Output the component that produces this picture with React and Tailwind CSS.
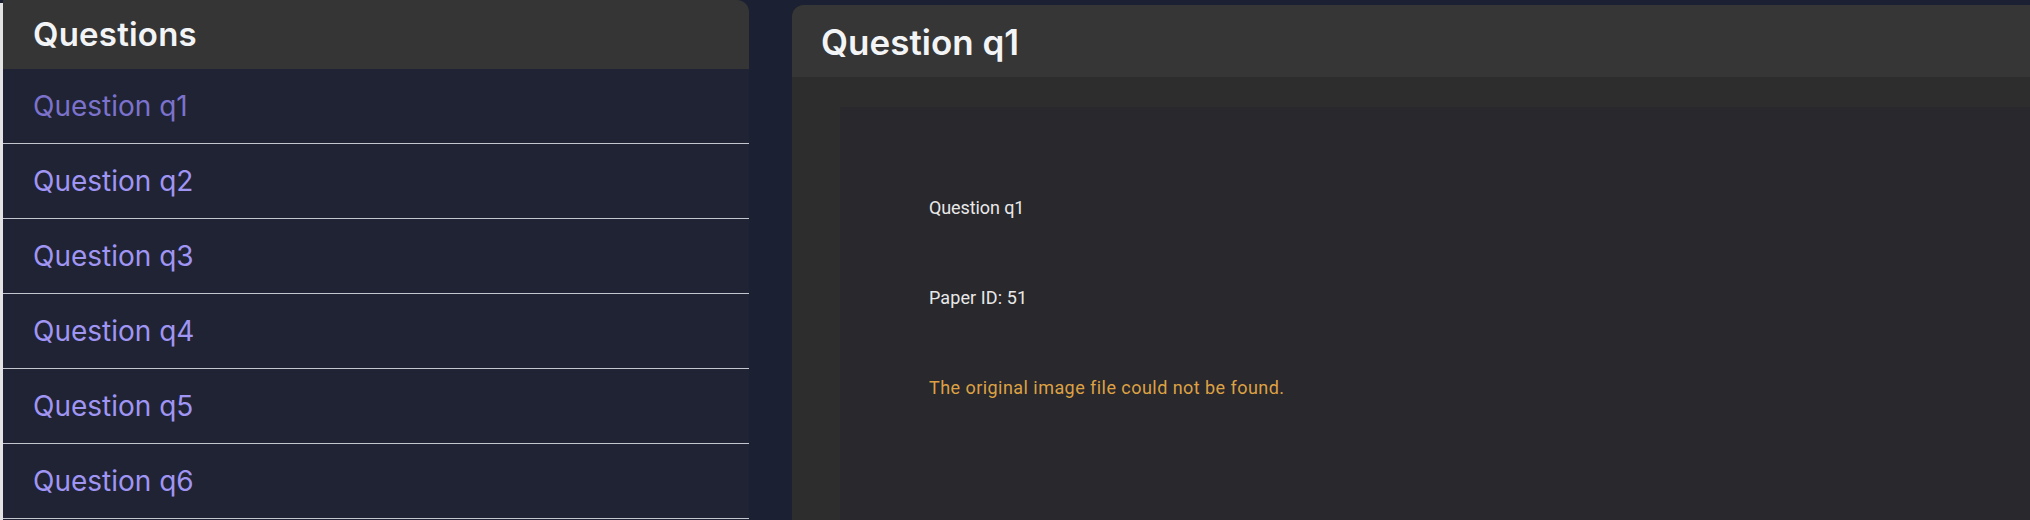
import React from 'react';

const questions = ['q1', 'q2', 'q3', 'q4', 'q5', 'q6'];

export default function App() {
  const active = 'q1';

  return (
    <div className="h-[520px] w-full overflow-hidden bg-[#1b2133] flex font-['Inter','Noto_Sans',sans-serif]">
      {/* thin light edge on the far left */}
      <div className="w-[3px] shrink-0 mt-[3px] bg-[#e3e3e3]" />

      {/* ── Question list ─────────────────────────── */}
      <aside className="w-[746px] shrink-0 flex flex-col bg-[#1f2334] rounded-tr-[12px] overflow-hidden">
        <div className="h-[69px] shrink-0 flex items-center pl-[30px] bg-[#353535]">
          <h1 className="text-[33px] font-semibold text-[#f3f4f6] leading-none tracking-[0.2px]">Questions</h1>
        </div>
        <ul>
          {questions.map(q => (
            <li
              key={q}
              className="h-[75px] flex items-center pl-[30px] border-b border-[#c3c6ce]"
            >
              <span className={`text-[28px] leading-none ${q === active ? 'text-[#7c72cc]' : 'text-[#a095f3]'}`}>
                Question {q}
              </span>
            </li>
          ))}
        </ul>
      </aside>

      {/* ── Detail pane ───────────────────────────── */}
      <main className="ml-[43px] mt-[5px] flex-1 flex flex-col bg-[#2d2d2d] rounded-tl-[12px] overflow-hidden">
        <div className="h-[72px] shrink-0 flex items-center pl-[29px] pt-[3px] bg-[#363636]">
          <h2 className="text-[35px] font-semibold text-[#f3f4f6] leading-none">Question q1</h2>
        </div>
        <div className="flex-1 pt-[30px] pl-[48px]">
          <div className="h-full bg-[#28282d] pl-[89px] pt-[90px] flex flex-col gap-[68px] font-['Roboto',sans-serif] text-[18px] leading-[22px]">
            <p className="text-[#e8e8e8] tracking-[-0.1px]">Question q1</p>
            <p className="text-[#e8e8e8] tracking-[0.1px]">Paper ID: 51</p>
            <p className="text-[#dea143] tracking-[0.45px]">The original image file could not be found.</p>
          </div>
        </div>
      </main>
    </div>
  );
}
